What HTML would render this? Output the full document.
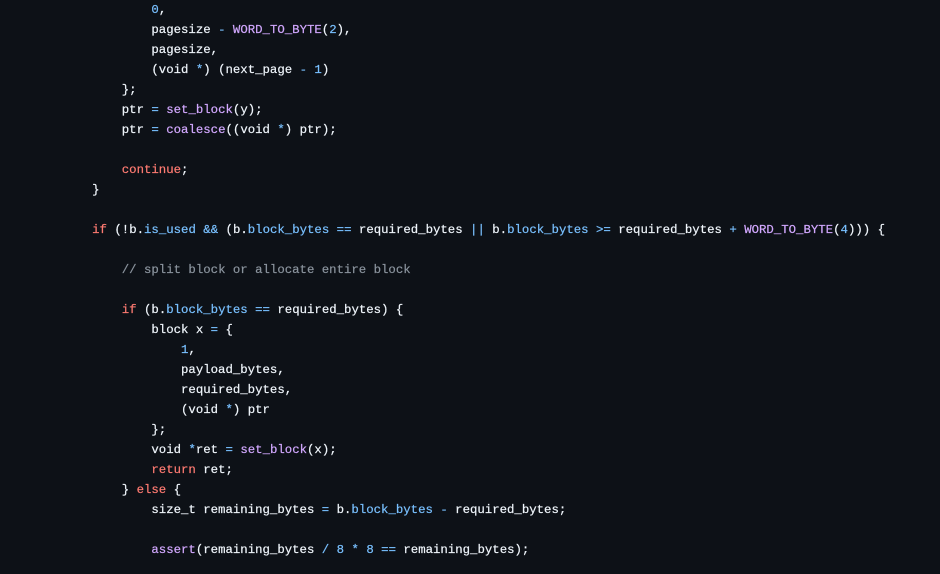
<!DOCTYPE html>
<html><head><style>
body{margin:0;background:#0d1117;width:940px;height:574px;overflow:hidden}
pre{margin:0;padding:0 0 0 62.5px;font-family:"Liberation Mono",monospace;font-size:12.35px;line-height:20px;color:#f0f6fc;white-space:pre;-webkit-text-stroke:0.2px currentColor}
.k{color:#ff7b72}.c{color:#79c0ff}.f{color:#d2a8ff}.m{color:#8b949e}
</style></head><body><pre>            <span class="c">0</span>,
            pagesize <span class="c">-</span> <span class="f">WORD_TO_BYTE</span>(<span class="c">2</span>),
            pagesize,
            (void <span class="c">*</span>) (next_page <span class="c">-</span> <span class="c">1</span>)
        };
        ptr <span class="c">=</span> <span class="f">set_block</span>(y);
        ptr <span class="c">=</span> <span class="f">coalesce</span>((void <span class="c">*</span>) ptr);

        <span class="k">continue</span>;
    }

    <span class="k">if</span> (!b.<span class="c">is_used</span> <span class="c">&amp;&amp;</span> (b.<span class="c">block_bytes</span> <span class="c">==</span> required_bytes <span class="c">||</span> b.<span class="c">block_bytes</span> <span class="c">&gt;=</span> required_bytes <span class="c">+</span> <span class="f">WORD_TO_BYTE</span>(<span class="c">4</span>))) {

        <span class="m">// split block or allocate entire block</span>

        <span class="k">if</span> (b.<span class="c">block_bytes</span> <span class="c">==</span> required_bytes) {
            block x <span class="c">=</span> {
                <span class="c">1</span>,
                payload_bytes,
                required_bytes,
                (void <span class="c">*</span>) ptr
            };
            void <span class="c">*</span>ret <span class="c">=</span> <span class="f">set_block</span>(x);
            <span class="k">return</span> ret;
        } <span class="k">else</span> {
            size_t remaining_bytes <span class="c">=</span> b.<span class="c">block_bytes</span> <span class="c">-</span> required_bytes;

            <span class="f">assert</span>(remaining_bytes <span class="c">/</span> <span class="c">8</span> <span class="c">*</span> <span class="c">8</span> <span class="c">==</span> remaining_bytes);
</pre></body></html>
